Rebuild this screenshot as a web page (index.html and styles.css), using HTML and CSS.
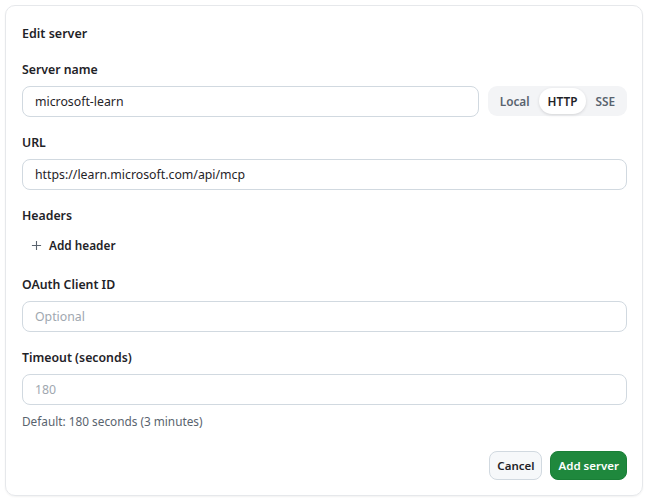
FILE: index.html
```html
<!DOCTYPE html>
<html lang="en">

<head>
    <title>Edit server</title>
    <link rel="stylesheet" href="styles.css">
</head>

<body>
    <form class="card">
        <h2 class="title">Edit server</h2>

        <div class="field">
            <label class="label" for="name">Server name</label>
            <div class="name-row">
                <input class="input" id="name" type="text" value="microsoft-learn" />
                <div class="segmented">
                    <span class="seg">Local</span>
                    <span class="seg active">HTTP</span>
                    <span class="seg">SSE</span>
                </div>
            </div>
        </div>

        <div class="field">
            <label class="label" for="url">URL</label>
            <input class="input" id="url" type="text" value="https://learn.microsoft.com/api/mcp" />
        </div>

        <div class="field">
            <span class="label">Headers</span>
            <button type="button" class="add-btn">
                <svg width="11" height="11" viewBox="0 0 12 12" fill="none" stroke="currentColor" stroke-width="1.2">
                    <path d="M6 1v10M1 6h10" />
                </svg>
                Add header
            </button>
        </div>

        <div class="field">
            <label class="label" for="client">OAuth Client ID</label>
            <input class="input" id="client" type="text" placeholder="Optional" />
        </div>

        <div class="field">
            <label class="label" for="timeout">Timeout (seconds)</label>
            <input class="input" id="timeout" type="text" placeholder="180" />
            <p class="help">Default: 180 seconds (3 minutes)</p>
        </div>

        <div class="actions">
            <button type="button" class="btn">Cancel</button>
            <button type="button" class="btn primary">Add server</button>
        </div>
    </form>
</body>

</html>
```

FILE: styles.css
```css
body {
    margin: 0;
    padding: 5px 3px 3px 5px;
    background: #ffffff;
    color: #1f2328;
    font-family: "Noto Sans", "Open Sans", sans-serif;
    font-size: 12.3px;
}

.card {
    display: flex;
    flex-direction: column;
    gap: 16px;
    height: 491px;
    box-sizing: border-box;
    padding: 18px 15px 15px 16px;
    border: 1px solid #e6e8eb;
    border-radius: 10px;
    box-shadow: 0 1px 2px rgba(31, 35, 40, 0.06);
}

.title {
    margin: 0;
    font-size: 12.5px;
    font-weight: 600;
    line-height: 20px;
}

.field {
    display: flex;
    flex-direction: column;
}

.label {
    font-weight: 600;
    line-height: 20px;
    margin-bottom: 6px;
}

.name-row {
    display: flex;
    gap: 9px;
    align-items: center;
}

.input {
    height: 31px;
    box-sizing: border-box;
    padding: 0 12px;
    border: 1px solid #d1d9e0;
    border-radius: 8px;
    font: inherit;
    color: #1f2328;
    background: #ffffff;
    outline: none;
}

.name-row .input {
    flex: 1;
}

.input::placeholder {
    color: #a0a7b0;
}

.segmented {
    display: flex;
    align-items: center;
    height: 30px;
    box-sizing: border-box;
    padding: 2px 3px;
    background: #f3f4f6;
    border-radius: 9px;
    margin-top: -2px;
}

.seg {
    padding: 0 9px;
    line-height: 26px;
    font-size: 11.8px;
    font-weight: 600;
    color: #59636e;
    border-radius: 13px;
}

.seg.active {
    background: #ffffff;
    color: #1f2328;
    box-shadow: 0 1px 3px rgba(31, 35, 40, 0.15);
}

.add-btn {
    align-self: flex-start;
    display: flex;
    align-items: center;
    gap: 7px;
    height: 28px;
    padding: 0 9px;
    margin-top: -1px;
    border: none;
    background: none;
    font: inherit;
    font-size: 11.8px;
    font-weight: 600;
    color: #1f2328;
}

.add-btn svg {
    color: #59636e;
}

.help {
    margin: 7px 0 0;
    font-size: 11.8px;
    line-height: 18px;
    color: #59636e;
}

.actions {
    margin-top: auto;
    display: flex;
    justify-content: flex-end;
    gap: 8px;
}

.btn {
    height: 29px;
    padding: 0 7px;
    border: 1px solid #d1d9e0;
    border-radius: 8px;
    background: #f6f8fa;
    font: inherit;
    font-size: 11.5px;
    font-weight: 600;
    color: #1f2328;
}

.btn.primary {
    background: #1f883d;
    border-color: #1a7f37;
    color: #ffffff;
}
```
